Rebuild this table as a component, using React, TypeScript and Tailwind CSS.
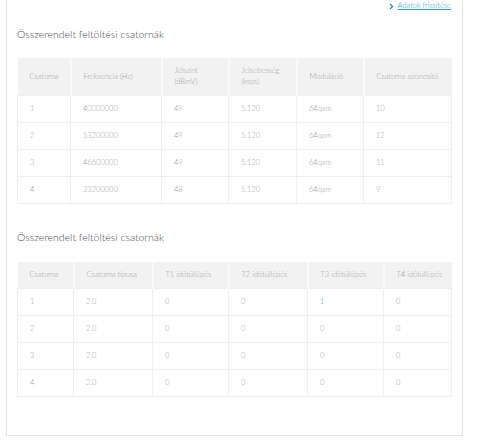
const upstream = [
  ["1", "40000000", "49", "5.120", "64qam", "10"],
  ["2", "53200000", "49", "5.120", "64qam", "12"],
  ["3", "46600000", "49", "5.120", "64qam", "11"],
  ["4", "33200000", "48", "5.120", "64qam", "9"],
];

const timeouts = [
  ["1", "2.0", "0", "0", "1", "0"],
  ["2", "2.0", "0", "0", "0", "0"],
  ["3", "2.0", "0", "0", "0", "0"],
  ["4", "2.0", "0", "0", "0", "0"],
];

const Title = ({ children }: { children: string }) => (
  <h2 className="text-[10.5px] font-light text-[#4a4a4a] leading-none">{children}</h2>
);

const App = () => {
  return (
    <div className="w-[480px] h-[444px] bg-white font-['Lato','Liberation_Sans',sans-serif]">
      <div className="ml-[6px] w-[457px] h-[436px] border-x border-b border-[#e3e3e3] px-[10px]">
        <div className="flex justify-end items-center gap-[4px] pt-[1px] h-[11px] pr-[1px]">
          <svg width="5" height="7" viewBox="0 0 5 7" className="mt-[1px]">
            <path d="M1 1 L3.5 3.5 L1 6" stroke="#1a8fd4" strokeWidth="1.3" fill="none" />
          </svg>
          <a className="text-[7.5px] font-light text-[#2a9ad8] underline leading-none">Adatok frissítése</a>
        </div>

        <div className="mt-[18px]">
          <Title>Összerendelt feltöltési csatornák</Title>
        </div>
        <table className="mt-[18px] w-[434px] border-collapse table-fixed text-[7.5px] font-light text-[#a0a0a0] text-left">
          <colgroup>
            <col className="w-[53px]" />
            <col className="w-[91px]" />
            <col className="w-[67px]" />
            <col className="w-[68px]" />
            <col className="w-[67px]" />
            <col className="w-[88px]" />
          </colgroup>
          <thead>
            <tr className="h-[38px] bg-[#f2f2f2]">
              <th className="font-light pl-[12px] border-x-2 border-[#fafafa] border-l-0">Csatorna</th>
              <th className="font-light pl-[12px] border-x-2 border-[#fafafa]">Frekvencia (Hz)</th>
              <th className="font-light pl-[12px] border-x-2 border-[#fafafa] leading-[11px]">Jelszint<br />(dBmV)</th>
              <th className="font-light pl-[12px] border-x-2 border-[#fafafa] leading-[11px]">Jelsebesség<br />(ksps)</th>
              <th className="font-light pl-[12px] border-x-2 border-[#fafafa]">Moduláció</th>
              <th className="font-light pl-[12px] border-x-2 border-[#fafafa] border-r-0">Csatorna azonosító</th>
            </tr>
          </thead>
          <tbody>
            {upstream.map((row) => (
              <tr key={row[0]} className="h-[27px]">
                {row.map((cell, i) => (
                  <td key={i} className="pl-[12px] border border-[#efefef]">{cell}</td>
                ))}
              </tr>
            ))}
          </tbody>
        </table>

        <div className="mt-[28px]">
          <Title>Összerendelt feltöltési csatornák</Title>
        </div>
        <table className="mt-[19px] w-[434px] border-collapse table-fixed text-[7.5px] font-light text-[#a0a0a0] text-left">
          <colgroup>
            <col className="w-[56px]" />
            <col className="w-[79px]" />
            <col className="w-[76px]" />
            <col className="w-[79px]" />
            <col className="w-[76px]" />
            <col className="w-[68px]" />
          </colgroup>
          <thead>
            <tr className="h-[27px] bg-[#f2f2f2]">
              <th className="font-light pl-[12px] border-x-2 border-[#fafafa] border-l-0">Csatorna</th>
              <th className="font-light pl-[12px] border-x-2 border-[#fafafa]">Csatorna típusa</th>
              <th className="font-light pl-[12px] border-x-2 border-[#fafafa]">T1 időtúllépés</th>
              <th className="font-light pl-[12px] border-x-2 border-[#fafafa]">T2 időtúllépés</th>
              <th className="font-light pl-[12px] border-x-2 border-[#fafafa]">T3 időtúllépés</th>
              <th className="font-light pl-[12px] border-x-2 border-[#fafafa] border-r-0">T4 időtúllépés</th>
            </tr>
          </thead>
          <tbody>
            {timeouts.map((row) => (
              <tr key={row[0]} className="h-[27px]">
                {row.map((cell, i) => (
                  <td
                    key={i}
                    className={
                      i === 4 && cell === "1"
                        ? "pl-[12px] border border-[#efefef] text-[#2a9ad8]"
                        : "pl-[12px] border border-[#efefef]"
                    }
                  >
                    {cell}
                  </td>
                ))}
              </tr>
            ))}
          </tbody>
        </table>
      </div>
    </div>
  );
};

export default App;
